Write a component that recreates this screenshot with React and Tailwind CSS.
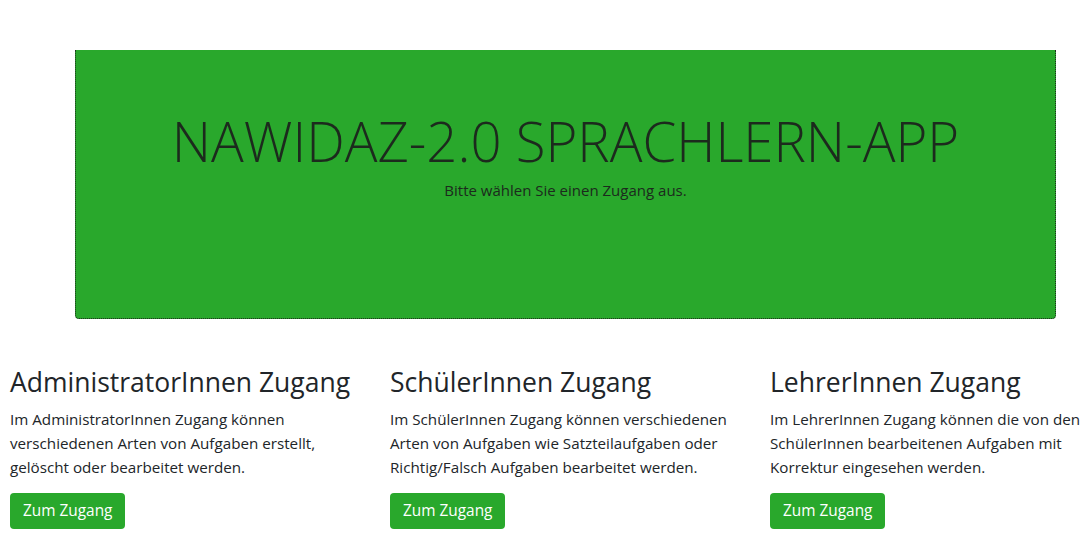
import React from 'react';

const zugaenge = [
  {
    title: 'AdministratorInnen Zugang',
    text: 'Im AdministratorInnen Zugang können verschiedenen Arten von Aufgaben erstellt, gelöscht oder bearbeitet werden.',
  },
  {
    title: 'SchülerInnen Zugang',
    text: 'Im SchülerInnen Zugang können verschiedenen Arten von Aufgaben wie Satzteilaufgaben oder Richtig/Falsch Aufgaben bearbeitet werden.',
  },
  {
    title: 'LehrerInnen Zugang',
    text: 'Im LehrerInnen Zugang können die von den SchülerInnen bearbeitenen Aufgaben mit Korrektur eingesehen werden.',
  },
];

const App = () => {
  return (
    <div className="w-full min-h-[560px] overflow-x-hidden bg-white text-[#212529] font-['Open_Sans',sans-serif]">
      {/* Jumbotron */}
      <div className="ml-[75px] mt-[50px] w-[981px] h-[269px] bg-[#29a82c] border-l border-r border-b border-dotted border-[#1d2b1d] rounded-bl-[4px] rounded-br-[4px] text-center pt-[59px]">
        <h1 className="text-[54.5px] leading-[1.2] font-light text-[#1c2a1d] whitespace-nowrap">
          NAWIDAZ-2.0 SPRACHLERN-APP
        </h1>
        <p className="text-[15px] leading-6 mt-[4px] text-[#1c2a1d]">Bitte wählen Sie einen Zugang aus.</p>
      </div>

      {/* Zugänge */}
      <div className="flex gap-[30px] pl-[10px] mt-[47px] w-[1200px]">
        {zugaenge.map((z) => (
          <div key={z.title} className="w-[350px] shrink-0">
            <h3 className="text-[26.5px] leading-[1.2] font-normal pt-[1px] mb-2 whitespace-nowrap">{z.title}</h3>
            <p className="text-[15.2px] leading-6 mb-[14px]">{z.text}</p>
            <button className="px-[13px] py-[6px] text-[15.4px] leading-6 text-white bg-[#29a82c] rounded-[4px]">
              Zum Zugang
            </button>
          </div>
        ))}
      </div>
    </div>
  );
};

export default App;
